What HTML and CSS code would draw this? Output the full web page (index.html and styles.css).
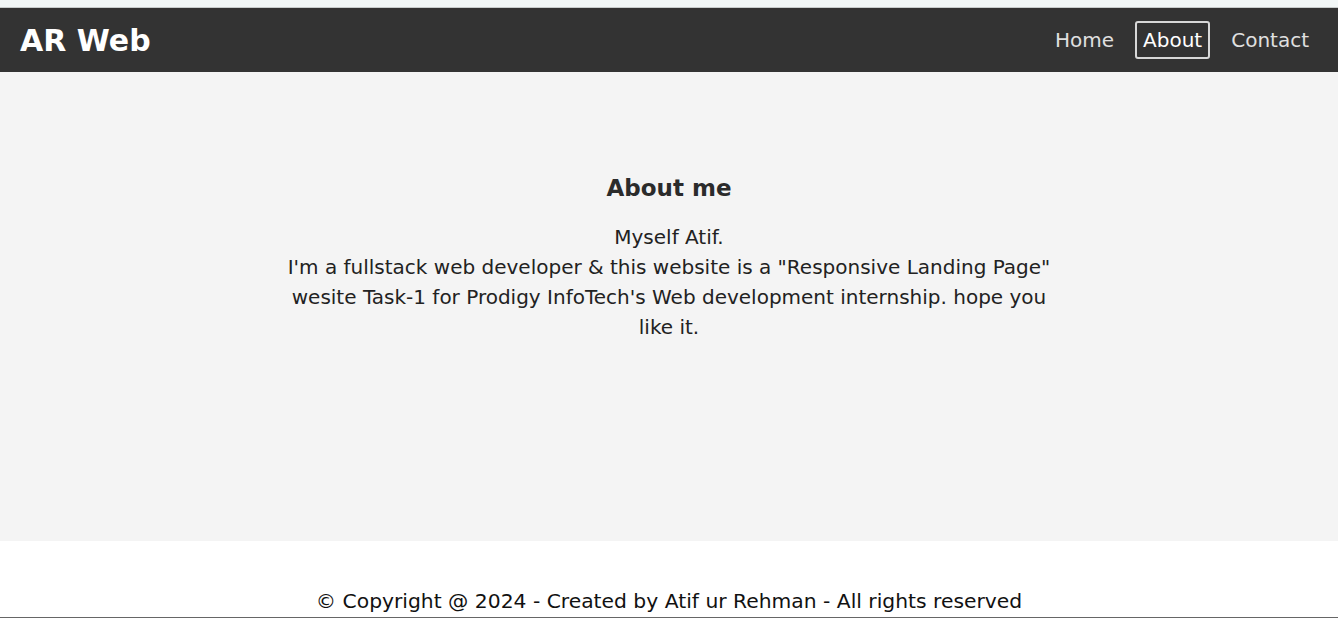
FILE: index.html
```html
<!DOCTYPE html>
<html lang="en">
<head>
<meta charset="utf-8">
<title>AR Web</title>
<link rel="stylesheet" href="styles.css">
</head>
<body>
<div class="topstrip"></div>
<header class="header">
  <div class="logo">AR Web</div>
  <nav class="nav">
    <a class="nav-link" href="#">Home</a>
    <a class="nav-link active" href="#">About</a>
    <a class="nav-link" href="#">Contact</a>
  </nav>
</header>
<main class="main">
  <section class="about">
    <h2 class="about-title">About me</h2>
    <p class="about-text">Myself Atif.<br>I'm a fullstack web developer &amp; this website is a "Responsive Landing Page" wesite Task-1 for Prodigy InfoTech's Web development internship. hope you like it.</p>
  </section>
</main>
<footer class="footer">
  <p class="footer-text">© Copyright @ 2024 - Created by Atif ur Rehman - All rights reserved</p>
</footer>
</body>
</html>
```
FILE: styles.css
```css
* { box-sizing: border-box; }
html, body { margin: 0; padding: 0; }
body {
  font-family: Verdana, "DejaVu Sans", sans-serif;
  background: #ffffff;
  color: #111;
  height: 618px;
  overflow: hidden;
}
.topstrip {
  height: 8px;
  background: #f2f7f7;
  border-bottom: 1px solid #c8cccc;
}
.header {
  height: 64px;
  background: #333333;
  display: flex;
  align-items: center;
  justify-content: space-between;
  padding: 0 21px 0 20px;
}
.logo {
  color: #ffffff;
  font-weight: bold;
  font-size: 30px;
}
.nav {
  display: flex;
  align-items: center;
  gap: 13px;
}
.nav-link {
  color: #e0e0e0;
  text-decoration: none;
  font-size: 20px;
  padding: 6px 7px;
  border: 1px solid transparent;
  border-radius: 3px;
  line-height: 24px;
}
.nav-link.active {
  color: #ffffff;
  border: 2px solid #d8d8d8;
  padding: 5px 6px;
}
.main {
  height: 469px;
  background: #f4f4f4;
  display: flex;
  justify-content: center;
  padding-top: 100px;
}
.about {
  width: 780px;
  text-align: center;
  color: #222;
}
.about-title {
  margin: 0 0 18px;
  font-size: 23px;
  font-weight: bold;
  line-height: 32px;
  color: #2b2b2b;
}
.about-text {
  margin: 0;
  font-size: 20px;
  line-height: 30px;
}
.footer {
  height: 77px;
  background: #ffffff;
  border-bottom: 1px solid #666;
  display: flex;
  justify-content: center;
  align-items: flex-end;
}
.footer-text {
  margin: 0 0 3px;
  font-size: 20.3px;
  line-height: 26px;
  color: #111;
}
```
